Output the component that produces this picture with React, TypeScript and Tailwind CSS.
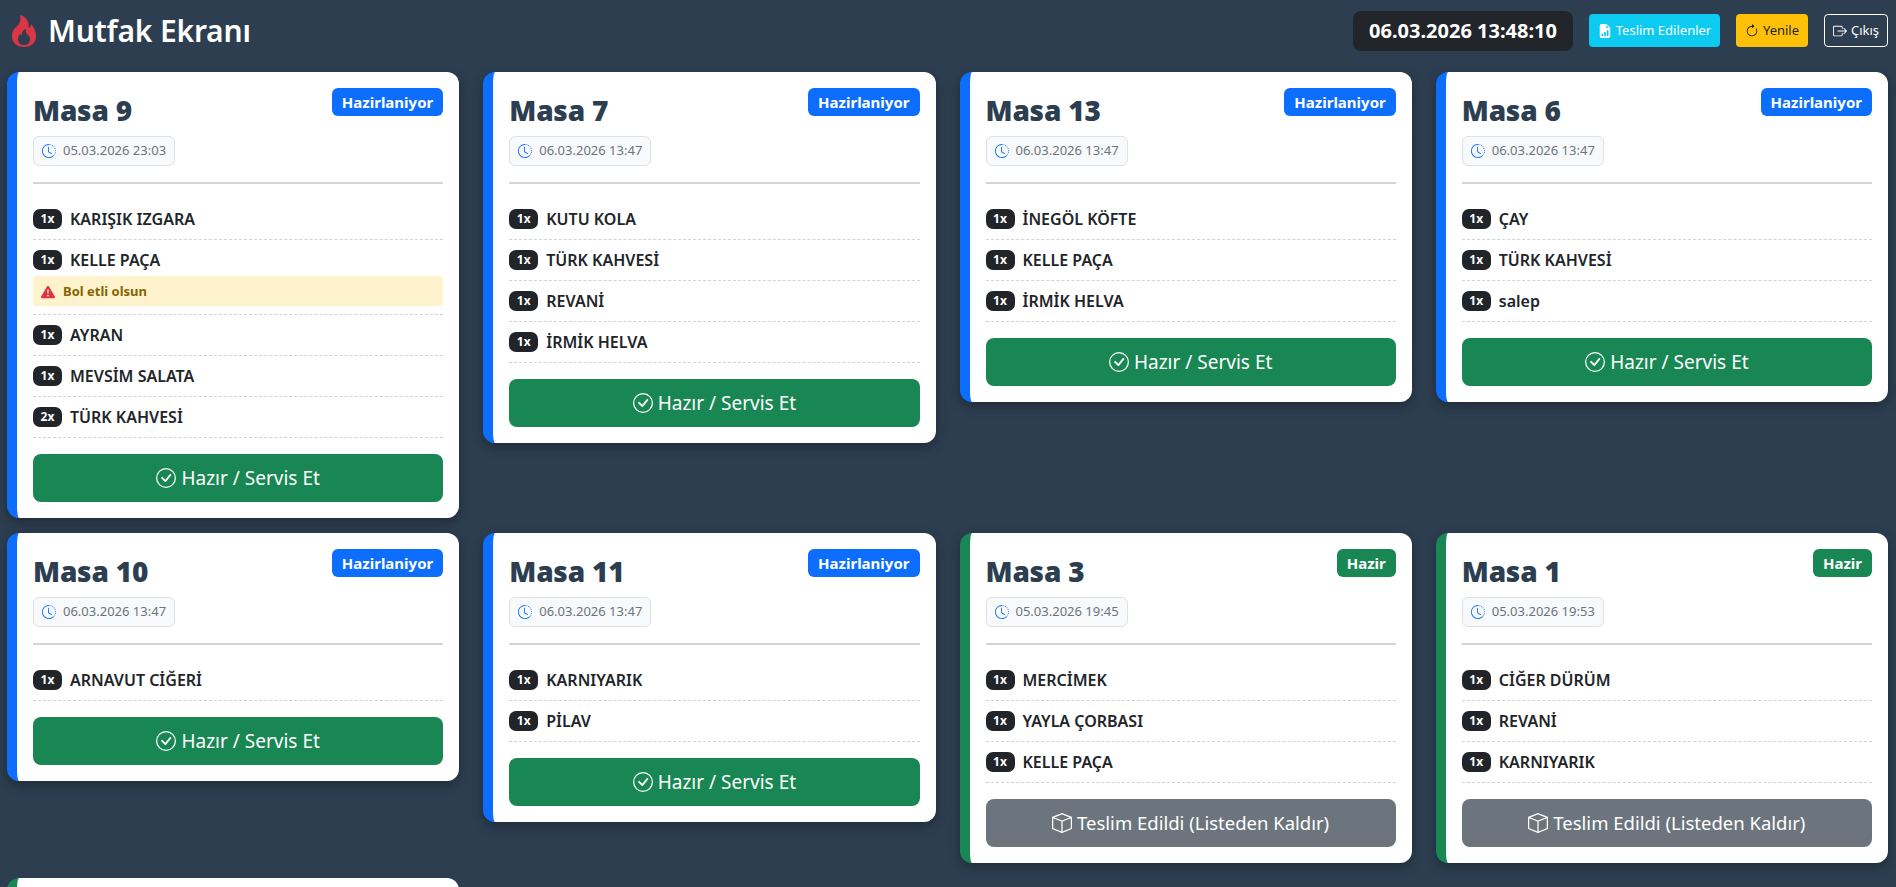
import React from 'react';
import {
  BsFire,
  BsFileEarmarkBarGraphFill,
  BsArrowClockwise,
  BsBoxArrowRight,
  BsClockHistory,
  BsExclamationTriangleFill,
  BsCheckCircle,
  BsBox,
} from 'react-icons/bs';

type OrderItem = { qty: number; name: string; note?: string };

type Order = {
  table: string;
  time: string;
  status: 'preparing' | 'ready';
  items: OrderItem[];
};

const orders: Order[] = [
  {
    table: 'Masa 9',
    time: '05.03.2026 23:03',
    status: 'preparing',
    items: [
      { qty: 1, name: 'KARIŞIK IZGARA' },
      { qty: 1, name: 'KELLE PAÇA', note: 'Bol etli olsun' },
      { qty: 1, name: 'AYRAN' },
      { qty: 1, name: 'MEVSİM SALATA' },
      { qty: 2, name: 'TÜRK KAHVESİ' },
    ],
  },
  {
    table: 'Masa 7',
    time: '06.03.2026 13:47',
    status: 'preparing',
    items: [
      { qty: 1, name: 'KUTU KOLA' },
      { qty: 1, name: 'TÜRK KAHVESİ' },
      { qty: 1, name: 'REVANİ' },
      { qty: 1, name: 'İRMİK HELVA' },
    ],
  },
  {
    table: 'Masa 13',
    time: '06.03.2026 13:47',
    status: 'preparing',
    items: [
      { qty: 1, name: 'İNEGÖL KÖFTE' },
      { qty: 1, name: 'KELLE PAÇA' },
      { qty: 1, name: 'İRMİK HELVA' },
    ],
  },
  {
    table: 'Masa 6',
    time: '06.03.2026 13:47',
    status: 'preparing',
    items: [
      { qty: 1, name: 'ÇAY' },
      { qty: 1, name: 'TÜRK KAHVESİ' },
      { qty: 1, name: 'salep' },
    ],
  },
  {
    table: 'Masa 10',
    time: '06.03.2026 13:47',
    status: 'preparing',
    items: [{ qty: 1, name: 'ARNAVUT CİĞERİ' }],
  },
  {
    table: 'Masa 11',
    time: '06.03.2026 13:47',
    status: 'preparing',
    items: [
      { qty: 1, name: 'KARNIYARIK' },
      { qty: 1, name: 'PİLAV' },
    ],
  },
  {
    table: 'Masa 3',
    time: '05.03.2026 19:45',
    status: 'ready',
    items: [
      { qty: 1, name: 'MERCİMEK' },
      { qty: 1, name: 'YAYLA ÇORBASI' },
      { qty: 1, name: 'KELLE PAÇA' },
    ],
  },
  {
    table: 'Masa 1',
    time: '05.03.2026 19:53',
    status: 'ready',
    items: [
      { qty: 1, name: 'CİĞER DÜRÜM' },
      { qty: 1, name: 'REVANİ' },
      { qty: 1, name: 'KARNIYARIK' },
    ],
  },
];

const OrderCard: React.FC<{ order: Order }> = ({ order }) => {
  const ready = order.status === 'ready';

  return (
    <div
      className={`rounded-xl border-l-[10px] bg-white p-4 shadow-[0_4px_12px_rgba(0,0,0,0.3)] ${
        ready ? 'border-[#198754]' : 'border-[#0d6efd]'
      }`}
    >
      <div className="flex items-start justify-between">
        <div>
          <h3 className="mt-[3px] h-[38px] text-[28px] leading-[38px] font-black tracking-[-0.2px] text-[#2c3e50]">
            {order.table}
          </h3>
          <div className="mt-[7px] flex h-[30px] w-fit items-center gap-[7px] rounded-md border border-[#dee2e6] bg-[#f8f9fa] px-2 text-[13px] text-[#6c757d]">
            <BsClockHistory className="text-[14px] text-[#0d6efd]" />
            {order.time}
          </div>
        </div>
        <span
          className={`flex h-7 items-center rounded-md px-[10px] text-[15px] font-bold text-white ${
            ready ? 'bg-[#198754]' : 'bg-[#0d6efd]'
          }`}
        >
          {ready ? 'Hazir' : 'Hazirlaniyor'}
        </span>
      </div>

      <div className="mt-4 border-t-2 border-[#d3d4d5]" />

      <div className="mt-[15px]">
        {order.items.map((item) => (
          <div key={item.name} className="border-b border-dashed border-[#ced4da] py-[10px]">
            <div className="flex h-5 items-center gap-2">
              <span className="flex h-5 w-[29px] items-center justify-center rounded-[7px] bg-[#212529] text-[12px] font-bold text-white">
                {item.qty}x
              </span>
              <span className="text-[16px] font-semibold text-[#212529]">{item.name}</span>
            </div>
            {item.note ? (
              <div className="mt-[6px] mb-[-2px] flex h-[30px] items-center gap-2 rounded bg-[#fff3cd] px-2 pt-[1px] text-[13px] font-bold text-[#856404]">
                <BsExclamationTriangleFill className="text-[14px] text-[#dc3545]" />
                {item.note}
              </div>
            ) : null}
          </div>
        ))}
      </div>

      <button
        className={`mt-4 flex h-12 w-full items-center justify-center gap-[5px] rounded-lg text-white ${
          ready ? 'bg-[#6c757d] text-[18.5px]' : 'bg-[#198754] text-[19px]'
        }`}
      >
        {ready ? <BsBox className="text-[20px]" /> : <BsCheckCircle className="text-[20px]" />}
        {ready ? 'Teslim Edildi (Listeden Kaldır)' : 'Hazır / Servis Et'}
      </button>
    </div>
  );
};

export default function App() {
  return (
    <div className="h-screen overflow-hidden bg-[#2c3e50] pr-[8px] pl-[7px] font-['Noto_Sans','Liberation_Sans',sans-serif]">
      <header className="flex h-[72px] items-center justify-between pb-[11px]">
        <h1 className="flex items-center gap-[8px] pl-[1px] text-[30px] font-semibold tracking-[-0.2px] text-white">
          <BsFire className="text-[32px] text-[#dc3545]" />
          Mutfak Ekranı
        </h1>
        <div className="flex items-center gap-4">
          <div className="flex h-10 w-[220px] items-center justify-center rounded-lg bg-[#212529] text-[20px] font-bold text-white">
            06.03.2026 13:48:10
          </div>
          <button className="flex h-[33px] w-[131px] items-center justify-center gap-1 rounded bg-[#0dcaf0] text-[13px] text-white">
            <BsFileEarmarkBarGraphFill className="text-[14px]" />
            Teslim Edilenler
          </button>
          <button className="flex h-[33px] w-[72px] items-center justify-center gap-1 rounded bg-[#ffc107] text-[13px] text-[#212529]">
            <BsArrowClockwise className="text-[14px]" />
            Yenile
          </button>
          <button className="flex h-[33px] w-16 items-center justify-center gap-1 rounded border border-white text-[13px] text-white">
            <BsBoxArrowRight className="text-[14px]" />
            Çıkış
          </button>
        </div>
      </header>

      <main className="grid grid-cols-4 items-start gap-x-6 gap-y-[15px]">
        {orders.map((order) => (
          <OrderCard key={order.table} order={order} />
        ))}
        <div className="h-[300px] rounded-xl border-l-[10px] border-[#198754] bg-white" />
      </main>
    </div>
  );
}
